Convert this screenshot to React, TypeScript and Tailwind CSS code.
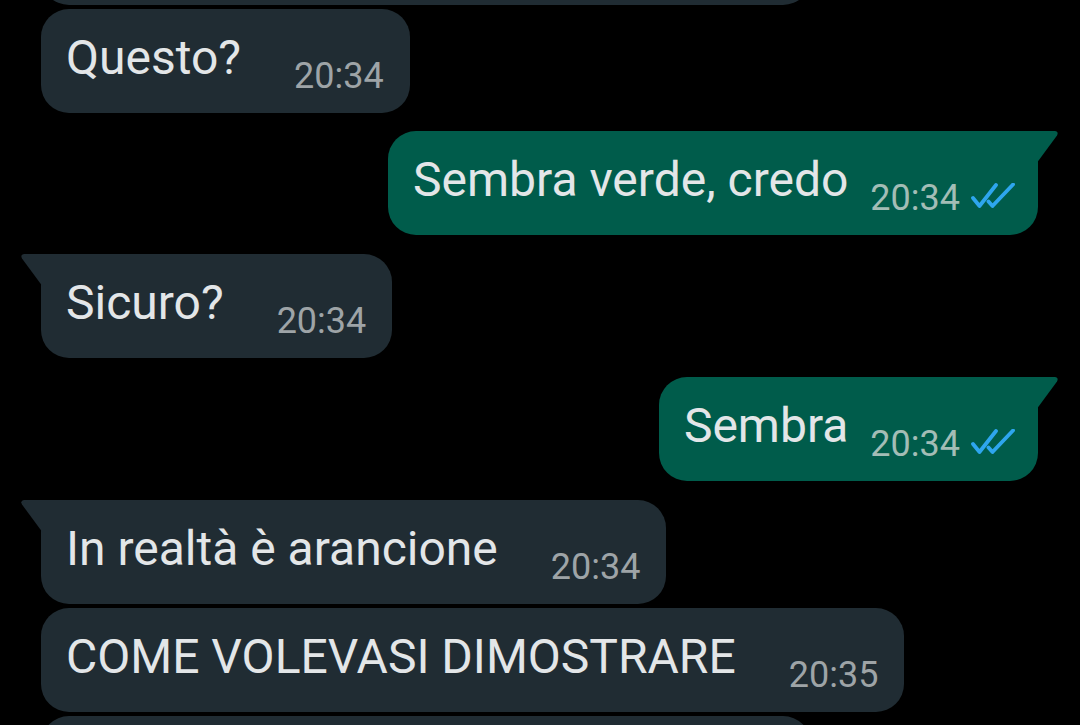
import React from 'react';

type Msg = {
  text?: string;
  time?: string;
  out?: boolean;
  tail?: boolean;
  gap: string;
  width?: string;
};

const messages: Msg[] = [
  { gap: 'mt-[-99px]', width: 'w-[770px]' },
  { text: 'Questo?', time: '20:34', gap: 'mt-[4px]' },
  { text: 'Sembra verde, credo', time: '20:34', out: true, tail: true, gap: 'mt-[18px]' },
  { text: 'Sicuro?', time: '20:34', tail: true, gap: 'mt-[19px]' },
  { text: 'Sembra', time: '20:34', out: true, tail: true, gap: 'mt-[19px]' },
  { text: 'In realtà è arancione', time: '20:34', tail: true, gap: 'mt-[19px]' },
  { text: 'COME VOLEVASI DIMOSTRARE', time: '20:35', gap: 'mt-[4px]' },
  { gap: 'mt-[4px]', width: 'w-[770px]' },
];

const Ticks = () => (
  <svg width="44" height="26" viewBox="0 0 44 26" fill="none" className="ml-[11px] mt-[30px] shrink-0">
    <path d="M2 15 L8.5 23 L25 2" stroke="#2ea6ee" strokeWidth="3.8" strokeLinecap="round" strokeLinejoin="round" />
    <path d="M17.5 18.5 L21.5 23 L42 1.5" stroke="#2ea6ee" strokeWidth="3.8" strokeLinecap="round" strokeLinejoin="round" />
  </svg>
);

const Tail = ({ out }: { out?: boolean }) =>
  out ? (
    <svg width="23" height="33" viewBox="0 0 23 33" className="absolute top-0 right-[-21px]">
      <path d="M0 0 L19 0 Q23 0.5 21 4.5 L0 33 Z" fill="#005c4b" />
    </svg>
  ) : (
    <svg width="23" height="33" viewBox="0 0 23 33" className="absolute top-0 left-[-21px]">
      <path d="M23 0 L4 0 Q0 0.5 2 4.5 L23 33 Z" fill="#202c33" />
    </svg>
  );

const Bubble = ({ m }: { m: Msg }) => {
  const bg = m.out ? 'bg-[#005c4b]' : 'bg-[#202c33]';
  const corner = m.tail ? (m.out ? 'rounded-tr-none' : 'rounded-tl-none') : '';
  return (
    <div className={`flex ${m.out ? 'justify-end pr-[42px]' : 'justify-start pl-[41px]'} ${m.gap}`}>
      <div className={`relative flex items-start h-[104px] rounded-[28px] ${corner} ${bg} ${m.width ?? ''} pl-[25px] ${m.out ? 'pr-[23px]' : 'pr-[26px]'} pt-[22px]`}>
        {m.tail && <Tail out={m.out} />}
        {m.text && (
          <span className="text-[48px] leading-[54px] text-[#e3e6e8] whitespace-nowrap">{m.text}</span>
        )}
        {m.time && (
          <span
            className={`text-[36px] leading-[40px] mt-[25px] whitespace-nowrap ${m.out ? 'ml-[22px] text-[#a3bdb6]' : 'ml-[53px] text-[#9ea4a7]'}`}
          >
            {m.time}
          </span>
        )}
        {m.out && <Ticks />}
      </div>
    </div>
  );
};

export default function App() {
  return (
    <div className="w-[1080px] h-[725px] overflow-hidden bg-black" style={{ fontFamily: 'Roboto, "Noto Sans", sans-serif' }}>
      <div className="flex flex-col">
        {messages.map((m, i) => (
          <Bubble key={i} m={m} />
        ))}
      </div>
    </div>
  );
}
